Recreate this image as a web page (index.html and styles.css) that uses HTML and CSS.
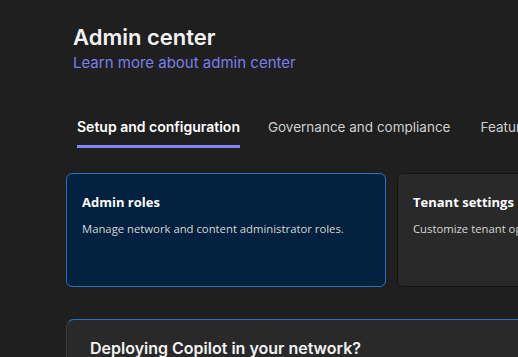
FILE: index.html
```html
<!DOCTYPE html>
<html lang="en">
<head>
    <meta charset="UTF-8">
    <meta name="viewport" content="width=device-width, initial-scale=1.0">
    <title>Admin center</title>
    <link rel="stylesheet" href="styles.css">
</head>
<body>
    <div class="page">
        <div class="header">
            <h1>Admin center</h1>
            <a class="learn-link" href="#">Learn more about admin center</a>
        </div>
        <div class="tabs">
            <div class="tab active">Setup and configuration</div>
            <div class="tab">Governance and compliance</div>
            <div class="tab">Features</div>
        </div>
        <div class="cards">
            <div class="card selected">
                <h2>Admin roles</h2>
                <p>Manage network and content administrator roles.</p>
            </div>
            <div class="card">
                <h2>Tenant settings</h2>
                <p>Customize tenant options and defaults.</p>
            </div>
        </div>
        <div class="banner">
            <h3>Deploying Copilot in your network?</h3>
        </div>
    </div>
</body>
</html>
```

FILE: styles.css
```css
html, body {
    margin: 0;
    background-color: #1f1f1f;
    overflow: hidden;
}
body {
    font-family: Inter, "Noto Sans", sans-serif;
    color: #ffffff;
}
.page {
    padding: 23px 0 0 66px;
    width: 700px;
}
.header {
    padding-left: 7px;
}
h1 {
    margin: 0;
    font-size: 22px;
    font-weight: 600;
    line-height: 28px;
    color: #f2f2f2;
}
.learn-link {
    display: block;
    margin-top: 2px;
    font-size: 15px;
    line-height: 20px;
    color: #7a7ee8;
    text-decoration: none;
}
.tabs {
    display: flex;
    margin-top: 35px;
    padding-left: 11px;
}
.tab {
    font-size: 13.5px;
    line-height: 20px;
    color: #cfcfcf;
    padding: 9px 0 8px;
    margin-right: 30px;
    border-bottom: 3px solid transparent;
}
.tab.active {
    font-size: 14px;
    color: #ffffff;
    font-weight: 600;
    margin-right: 28px;
    border-bottom-color: #7f85f5;
}
.cards {
    display: flex;
    gap: 11px;
    margin-top: 25px;
}
.card {
    width: 318px;
    height: 112px;
    flex-shrink: 0;
    box-sizing: content-box;
    background-color: #292929;
    border: 1px solid #141414;
    border-radius: 6px;
    font-family: "Open Sans", "Noto Sans", sans-serif;
}
.card.selected {
    background-color: #01213f;
    border-color: #2771c5;
}
.card h2 {
    margin: 19px 0 0 15px;
    font-size: 13px;
    font-weight: 700;
    line-height: 18px;
    color: #ffffff;
}
.card p {
    margin: 10px 0 0 15px;
    font-size: 11.3px;
    line-height: 16px;
    color: #d6d6d6;
    white-space: nowrap;
}
.banner {
    margin-top: 32px;
    height: 80px;
    background-color: #292929;
    border: 1px solid #3a3a3a;
    border-top-color: #2771c5;
    border-radius: 8px;
}
.banner h3 {
    margin: 17px 0 0 23px;
    font-size: 16px;
    font-weight: 600;
    line-height: 22px;
    color: #f2f2f2;
}
```
